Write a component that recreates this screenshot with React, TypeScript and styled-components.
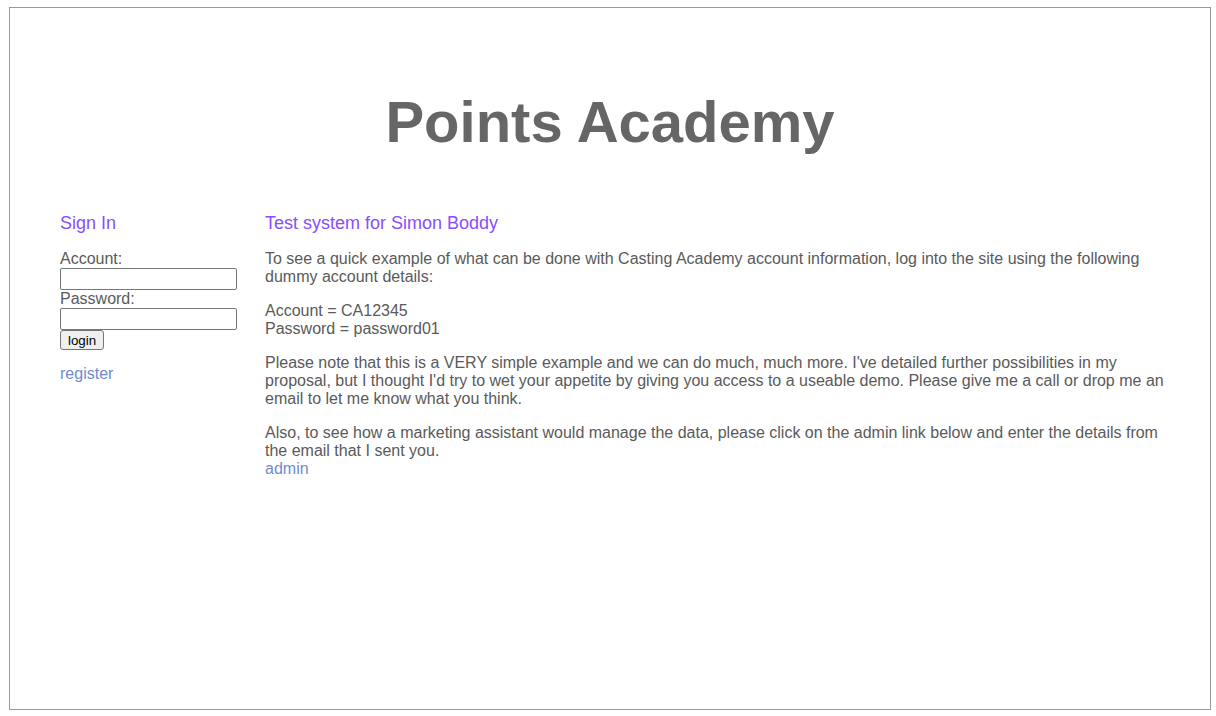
import React, { FC } from 'react';
import styled, { createGlobalStyle } from 'styled-components';

const GlobalStyle = createGlobalStyle`
  body {
    margin: 0;
    background: #fff;
    font-family: "Liberation Sans", Arial, sans-serif;
    color: #5a5a5a;
  }
`;

const Page = styled.div`
  box-sizing: border-box;
  width: 1202px;
  height: 703px;
  margin: 7px 0 0 9px;
  border: 1px solid #999;
  padding-top: 81px;
`;

const Title = styled.h1`
  margin: 0 0 58px;
  text-align: center;
  font-size: 58px;
  line-height: 66px;
  font-weight: bold;
  color: #666;
`;

const Columns = styled.div`
  display: grid;
  grid-template-columns: 177px 1fr;
  column-gap: 28px;
  padding: 0 34px 0 50px;
`;

const Heading = styled.h2`
  margin: 0 0 16px;
  font-size: 18px;
  line-height: 21px;
  font-weight: normal;
  color: #8a4dff;
`;

const SignIn = styled.form`
  display: flex;
  flex-direction: column;
  align-items: flex-start;
  font-size: 16px;
  line-height: 18px;
`;

const Field = styled.input`
  box-sizing: border-box;
  width: 177px;
  height: 22px;
  margin: 0;
  padding: 1px 2px;
  border: 1px solid #767676;
  border-radius: 2px;
  background: #fff;
`;

const Button = styled.button`
  box-sizing: border-box;
  height: 20px;
  margin: 0;
  padding: 0 7px;
  border: 1px solid #767676;
  border-radius: 3px;
  background: #efefef;
  color: #000;
  font-family: "Liberation Sans", Arial, sans-serif;
  font-size: 13.33px;
`;

const Link = styled.a`
  color: #6f8ccc;
  text-decoration: none;
  font-size: 16px;
  line-height: 18px;
`;

const Register = styled(Link)`
  display: block;
  margin-top: 15px;
`;

const Main = styled.div`
  font-size: 16px;
  line-height: 18px;
`;

const Para = styled.p<{ tight?: boolean }>`
  margin: 0 0 ${(p) => (p.tight ? 0 : 16)}px;
`;

const App: FC = () => (
  <>
    <GlobalStyle />
    <Page>
      <Title>Points Academy</Title>
      <Columns>
        <div>
          <Heading>Sign In</Heading>
          <SignIn onSubmit={(e) => e.preventDefault()}>
            <span>Account:</span>
            <Field type="text" />
            <span>Password:</span>
            <Field type="password" />
            <Button type="submit">login</Button>
          </SignIn>
          <Register href="#">register</Register>
        </div>
        <Main>
          <Heading>Test system for Simon Boddy</Heading>
          <Para>
            To see a quick example of what can be done with Casting Academy account information, log into the
            site using the following dummy account details:
          </Para>
          <Para>
            Account = CA12345
            <br />
            Password = password01
          </Para>
          <Para>
            Please note that this is a VERY simple example and we can do much, much more. I've detailed further
            possibilities in my proposal, but I thought I'd try to wet your appetite by giving you access to a
            useable demo. Please give me a call or drop me an email to let me know what you think.
          </Para>
          <Para tight>
            Also, to see how a marketing assistant would manage the data, please click on the admin link below
            and enter the details from the email that I sent you.
          </Para>
          <Link href="#">admin</Link>
        </Main>
      </Columns>
    </Page>
  </>
);

export default App;
